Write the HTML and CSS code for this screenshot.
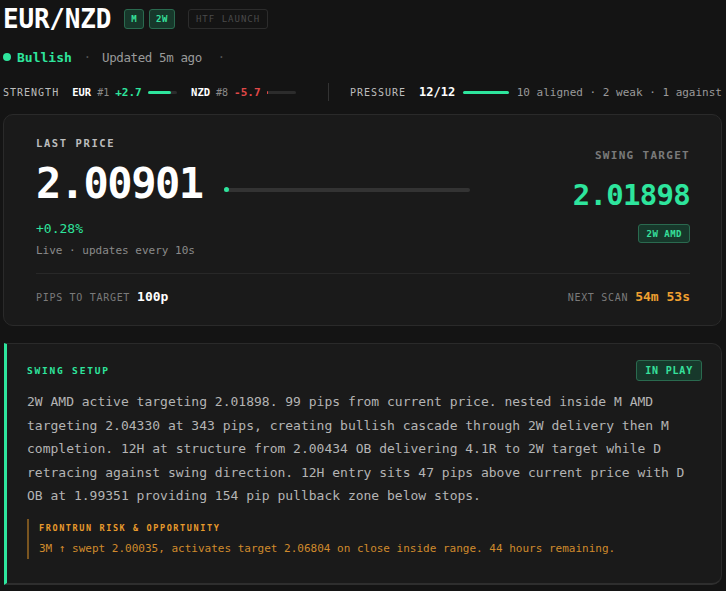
FILE: index.html
```html
<!DOCTYPE html>
<html lang="en">
<head>
  <meta charset="UTF-8" />
  <meta name="viewport" content="width=device-width, initial-scale=1" />
  <title>EUR/NZD</title>
  <link rel="stylesheet" href="styles.css">
</head>
<body>
  <div class="page">
    <div class="head">
      <h1>EUR/NZD</h1>
      <span class="tag tag-green">M</span>
      <span class="tag tag-green">2W</span>
      <span class="tag tag-muted">HTF LAUNCH</span>
    </div>

    <div class="status">
      <span class="dot"></span>
      <span class="bias">Bullish</span>
      <span class="sep">·</span>
      <span class="updated">Updated 5m ago</span>
      <span class="sep sep-end">·</span>
    </div>

    <div class="meters">
      <span class="meter-label">STRENGTH</span>
      <span class="ccy">EUR</span><span class="rank">#1</span><span class="val up">+2.7</span>
      <span class="mini"><span class="mini-fill green" style="width: 78%"></span></span>
      <span class="ccy ccy-gap">NZD</span><span class="rank">#8</span><span class="val down">-5.7</span>
      <span class="mini"><span class="mini-fill red" style="width: 6%"></span></span>
      <span class="vline"></span>
      <span class="meter-label">PRESSURE</span>
      <span class="score">12/12</span>
      <span class="pbar"></span>
      <span class="pnote">10 aligned · 2 weak · 1 against</span>
    </div>

    <div class="card price-card">
      <div class="price-top">
        <div class="price-left">
          <div class="label">LAST PRICE</div>
          <div class="price-row">
            <div class="price">2.00901</div>
            <div class="track"><span class="track-dot"></span></div>
          </div>
          <div class="change">+0.28%</div>
          <div class="live">Live · updates every 10s</div>
        </div>
        <div class="price-right">
          <div class="label label-dim">SWING TARGET</div>
          <div class="target">2.01898</div>
          <span class="tag tag-green tag-sm">2W AMD</span>
        </div>
      </div>
      <div class="price-foot">
        <div class="foot-item"><span class="foot-label">PIPS TO TARGET</span><span class="foot-val">100p</span></div>
        <div class="foot-item"><span class="foot-label">NEXT SCAN</span><span class="foot-val orange">54m 53s</span></div>
      </div>
    </div>

    <div class="card setup-card">
      <div class="setup-head">
        <span class="setup-title">SWING SETUP</span>
        <span class="tag tag-green tag-play">IN PLAY</span>
      </div>
      <p class="setup-text">2W AMD active targeting 2.01898. 99 pips from current price. nested inside M AMD targeting 2.04330 at 343 pips, creating bullish cascade through 2W delivery then M completion. 12H at structure from 2.00434 OB delivering 4.1R to 2W target while D retracing against swing direction. 12H entry sits 47 pips above current price with D OB at 1.99351 providing 154 pip pullback zone below stops.</p>
      <div class="risk">
        <div class="risk-title">FRONTRUN RISK &amp; OPPORTUNITY</div>
        <div class="risk-text">3M ↑ swept 2.00035, activates target 2.06804 on close inside range. 44 hours remaining.</div>
      </div>
    </div>
  </div>
</body>
</html>
```

FILE: styles.css
```css
* {
  margin: 0; padding: 0; box-sizing: border-box;
}
body {
  background: #141414;
  color: #e8e8e8;
  font-family: 'DejaVu Sans Mono', 'Liberation Mono', monospace;
}
.page {
  padding: 0 4px 0 3px;
}
.head {
  display: flex;
  align-items: center;
  height: 37px;
  gap: 5px;
}
h1 {
  font-size: 26px;
  font-weight: bold;
  letter-spacing: -0.2px;
  color: #fff;
  margin-right: 8px;
}
.tag {
  display: inline-flex;
  align-items: center;
  justify-content: center;
  height: 20px;
  padding: 0 6px;
  border-radius: 3px;
  font-size: 9px;
  font-weight: bold;
  letter-spacing: 0.5px;
}
.tag-green {
  background: #17382b;
  border: 1px solid #2a6a4f;
  color: #36e09c;
}
.tag-muted {
  margin-left: 8px;
  border: 1px solid #2c2c2c;
  color: #4a4a4a;
  font-weight: normal;
  letter-spacing: 1px;
  padding: 0 7px;
}
.status {
  display: flex;
  align-items: center;
  height: 40px;
  font-size: 12px;
}
.dot {
  width: 8px; height: 8px;
  border-radius: 50%;
  background: #2ee59d;
  margin-right: 6px;
}
.bias {
  color: #2ee59d;
  font-weight: bold;
  font-size: 13px;
}
.sep {
  color: #555;
  margin: 0 11px 0 12px;
}
.sep-end { margin: 0 0 0 16px; }
.updated {
  color: #9a9a9a;
  font-size: 12.5px;
  letter-spacing: -0.4px;
}
.meters {
  display: flex;
  align-items: center;
  height: 30px;
  font-size: 10px;
  white-space: nowrap;
}
.meter-label {
  color: #bdbdbd;
  letter-spacing: 1px;
  margin-right: 13px;
}
.ccy {
  color: #fff;
  font-weight: bold;
  font-size: 10.5px;
  margin-right: 6px;
}
.ccy-gap { margin-left: 14px; }
.rank {
  color: #8a8a8a;
  margin-right: 6px;
}
.val {
  font-weight: bold;
  font-size: 11px;
  margin-right: 6px;
}
.up { color: #2ee59d; }
.down { color: #e04848; }
.mini {
  width: 31px; height: 3px;
  background: #2c2c2c;
  border-radius: 2px;
  display: inline-block;
}
.mini-fill {
  display: block;
  height: 100%;
  border-radius: 2px;
}
.green { background: #2ee59d; }
.red { background: #e04848; }
.vline {
  width: 1px; height: 18px;
  background: #333;
  margin: 0 21px 0 32px;
}
.score {
  color: #fff;
  font-weight: bold;
  font-size: 12px;
  margin-right: 8px;
}
.pbar {
  width: 48px; height: 3px;
  background: #2ee59d;
  border-radius: 2px;
  margin-right: 8px;
}
.pnote {
  color: #9a9a9a;
  font-size: 11px;
}
.card {
  background: #1a1a1a;
  border: 1px solid #2a2a2a;
  border-radius: 10px;
}
.price-card {
  margin-top: 7px;
  padding: 22px 31px 21px 32px;
}
.price-top {
  display: flex;
  justify-content: space-between;
}
.label {
  font-size: 10.5px;
  font-weight: bold;
  letter-spacing: 1.6px;
  color: #bdbdbd;
}
.label-dim {
  color: #7a7a7a;
  font-size: 11px;
  letter-spacing: 1.3px;
}
.price-row {
  display: flex;
  align-items: center;
  margin-top: 13px;
}
.price {
  font-size: 42px;
  font-weight: bold;
  letter-spacing: -1.5px;
  color: #fff;
  line-height: 44px;
}
.track {
  width: 246px; height: 4px;
  background: #333;
  border-radius: 2px;
  margin: 11px 0 0 21px;
  display: flex;
  align-items: center;
}
.track-dot {
  width: 5px; height: 5px;
  border-radius: 50%;
  background: #2ee59d;
}
.change {
  margin-top: 15px;
  color: #2ee59d;
  font-size: 13px;
}
.live {
  margin-top: 8px;
  color: #8a8a8a;
  font-size: 11px;
}
.price-right {
  display: flex;
  flex-direction: column;
  align-items: flex-end;
  padding-top: 12px;
}
.target {
  margin-top: 16px;
  font-size: 29px;
  font-weight: bold;
  letter-spacing: -0.7px;
  color: #2ee59d;
}
.tag-sm {
  margin-top: 12px;
  height: 19px;
  padding: 0 7px;
}
.price-foot {
  display: flex;
  justify-content: space-between;
  align-items: center;
  border-top: 1px solid #282828;
  margin-top: 16px;
  padding-top: 15px;
}
.foot-item {
  display: flex;
  align-items: baseline;
  gap: 7px;
}
.foot-label {
  color: #7a7a7a;
  font-size: 10px;
  letter-spacing: 0.7px;
}
.foot-val {
  color: #fff;
  font-weight: bold;
  font-size: 13px;
}
.orange { color: #f0a030; }
.setup-card {
  margin-top: 17px;
  border-left: 3px solid #2ee59d;
  border-radius: 0 10px 10px 0;
  border-bottom: 2px solid #2e2e2e;
  padding: 16px 19px 24px 20px;
  margin-left: 1px;
}
.setup-head {
  display: flex;
  justify-content: space-between;
  align-items: center;
}
.setup-title {
  color: #2ee59d;
  font-size: 9.5px;
  font-weight: bold;
  letter-spacing: 1.8px;
}
.tag-play {
  height: 21px;
  padding: 0 8px;
  font-size: 10px;
  letter-spacing: 0.8px;
}
.setup-text {
  margin-top: 9px;
  color: #b4b4b4;
  font-size: 13px;
  line-height: 23.5px;
}
.risk {
  margin-top: 11px;
  border-left: 2px solid #7a5520;
  padding: 4px 0 4px 10px;
}
.risk-title {
  color: #e89a2c;
  font-size: 8.5px;
  font-weight: bold;
  letter-spacing: 1.6px;
}
.risk-text {
  margin-top: 9px;
  color: #d08a2c;
  font-size: 11px;
}
```
